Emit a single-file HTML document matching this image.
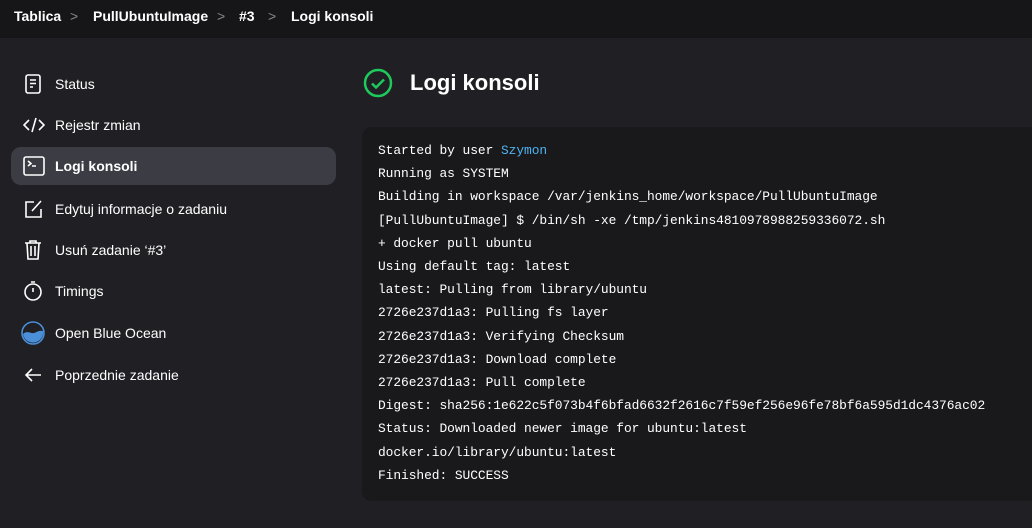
<!DOCTYPE html>
<html><head><meta charset="utf-8"><style>
*{margin:0;padding:0;box-sizing:border-box}
body{width:1032px;height:528px;overflow:hidden;background:#1f1f24;font-family:"Liberation Sans",sans-serif;color:#fff;position:relative}
.hdr{position:absolute;left:0;top:0;width:1032px;height:38px;background:#161618;font-size:14px;font-weight:bold}
.hdr span{position:absolute;top:8px}
.hdr .sep{color:#888;font-weight:normal}
.item{position:absolute;left:11px;width:325px;height:38px;font-size:14px;display:flex;align-items:center}
.item.act{background:#3c3c45;border-radius:10px;font-weight:bold}
.item svg{position:absolute;left:12px}
.item .t{position:absolute;left:44px}
.box{position:absolute;left:362px;top:127px;width:680px;height:374px;background:#19191c;border-radius:10px}
pre{position:absolute;left:378px;top:139px;font-family:"Liberation Mono",monospace;font-size:12.9px;letter-spacing:-0.05px;line-height:23.2px;color:#fff}
.u{color:#4fb3f0}
h1{position:absolute;left:410px;top:70px;font-size:22px;font-weight:bold}
</style></head><body>
<div class="hdr">
<span style="left:14px">Tablica</span><span class="sep" style="left:70px">&gt;</span>
<span style="left:93px">PullUbuntuImage</span><span class="sep" style="left:217px">&gt;</span>
<span style="left:239px">#3</span><span class="sep" style="left:268px">&gt;</span>
<span style="left:291px">Logi konsoli</span>
</div>
<div class="item" style="top:65px"><svg width="20" height="20" viewBox="0 0 20 20" fill="none" stroke="#fff" stroke-width="1.6"><rect x="3" y="1" width="14" height="18" rx="2"/><path d="M7 6h6M7 9.5h6M7 13h3"/></svg><span class="t">Status</span></div>
<div class="item" style="top:106px"><svg width="22" height="20" viewBox="0 0 22 20" fill="none" stroke="#fff" stroke-width="1.6"><path d="M6 5L1 10l5 5M16 5l5 5-5 5M13 3l-4 14"/></svg><span class="t">Rejestr zmian</span></div>
<div class="item act" style="top:147px"><svg width="22" height="20" viewBox="0 0 22 20" fill="none" stroke="#fff" stroke-width="1.6"><rect x="1" y="1" width="20" height="18" rx="2"/><path d="M5 5l3 2.5L5 10M9 10h4"/></svg><span class="t">Logi konsoli</span></div>
<div class="item" style="top:190px"><svg width="20" height="20" viewBox="0 0 20 20" fill="none" stroke="#fff" stroke-width="1.6"><path d="M11 3H3v15h15v-8M9 12l9-10"/></svg><span class="t">Edytuj informacje o zadaniu</span></div>
<div class="item" style="top:231px"><svg width="20" height="22" viewBox="0 0 20 22" fill="none" stroke="#fff" stroke-width="1.6"><path d="M2 4h16M7 4V2h6v2M4 4l1 16h10l1-16M8 7v10M12 7v10"/></svg><span class="t">Usuń zadanie ‘#3’</span></div>
<div class="item" style="top:272px"><svg width="20" height="22" viewBox="0 0 20 22" fill="none" stroke="#fff" stroke-width="1.6"><circle cx="10" cy="12" r="8"/><path d="M8 2h4M10 8v4"/></svg><span class="t">Timings</span></div>
<div class="item" style="top:314px"><svg width="24" height="24" viewBox="0 0 24 24" style="left:10px"><circle cx="12" cy="12" r="11" fill="#1f1f24" stroke="#4a8fd8" stroke-width="1.6"/><path d="M2 13c4-4 8 0 11-1s5-3 9-2a10 10 0 0 1-20 3z" fill="#4a8fd8"/></svg><span class="t">Open Blue Ocean</span></div>
<div class="item" style="top:356px"><svg width="20" height="20" viewBox="0 0 20 20" fill="none" stroke="#fff" stroke-width="1.6"><path d="M18 10H3M9 4l-6 6 6 6"/></svg><span class="t">Poprzednie zadanie</span></div>
<svg style="position:absolute;left:363px;top:68px" width="30" height="30" viewBox="0 0 30 30" fill="none" stroke="#1ec95c" stroke-width="2.5"><circle cx="15" cy="15" r="13"/><path d="M9 15.5l4 4 8-8"/></svg>
<h1>Logi konsoli</h1>
<div class="box"></div>
<pre>Started by user <span class="u">Szymon</span>
Running as SYSTEM
Building in workspace /var/jenkins_home/workspace/PullUbuntuImage
[PullUbuntuImage] $ /bin/sh -xe /tmp/jenkins4810978988259336072.sh
+ docker pull ubuntu
Using default tag: latest
latest: Pulling from library/ubuntu
2726e237d1a3: Pulling fs layer
2726e237d1a3: Verifying Checksum
2726e237d1a3: Download complete
2726e237d1a3: Pull complete
Digest: sha256:1e622c5f073b4f6bfad6632f2616c7f59ef256e96fe78bf6a595d1dc4376ac02
Status: Downloaded newer image for ubuntu:latest
docker.io/library/ubuntu:latest
Finished: SUCCESS</pre>
</body></html>
